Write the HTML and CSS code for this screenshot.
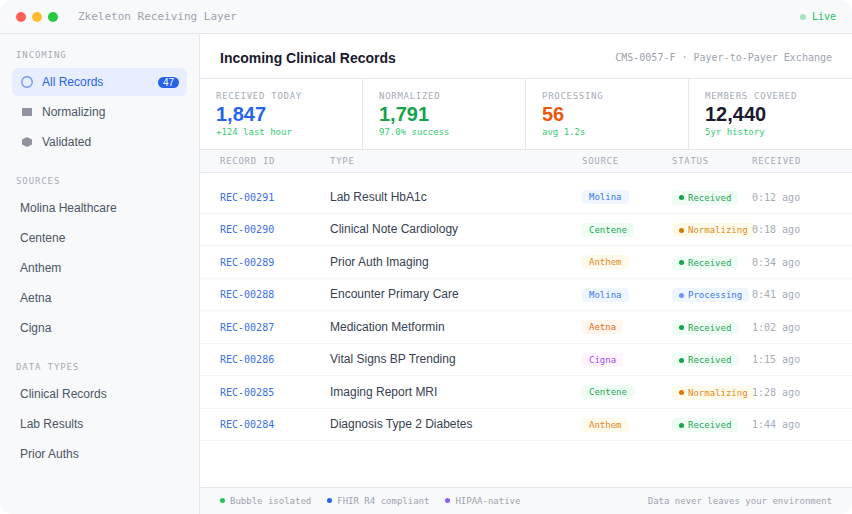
FILE: index.html
```html
<!DOCTYPE html>
<html lang="en">
<head>
<meta charset="utf-8">
<title>Zkeleton Receiving Layer</title>
<link rel="stylesheet" href="styles.css">
</head>
<body>
<div class="window">
  <header class="titlebar">
    <div class="lights"><span class="light red"></span><span class="light yellow"></span><span class="light green"></span></div>
    <span class="app-title">Zkeleton Receiving Layer</span>
    <span class="live"><span class="live-dot"></span>Live</span>
  </header>
  <div class="body">
    <aside class="sidebar">
      <div class="nav-label first">INCOMING</div>
      <div class="nav-item active"><svg class="nav-icon" viewBox="0 0 12 12"><circle cx="6" cy="6" r="5.25" fill="none" stroke="#6f94f3" stroke-width="1.3"/></svg>All Records<span class="count">47</span></div>
      <div class="nav-item"><svg class="nav-icon" viewBox="0 0 12 12"><rect x="1" y="2" width="10" height="8" fill="#8f939e"/></svg>Normalizing</div>
      <div class="nav-item"><svg class="nav-icon" viewBox="0 0 12 12"><polygon points="6,1 11,3.5 11,8.5 6,11 1,8.5 1,3.5" fill="#8f939e"/></svg>Validated</div>
      <div class="nav-label">SOURCES</div>
      <div class="nav-item">Molina Healthcare</div>
      <div class="nav-item">Centene</div>
      <div class="nav-item">Anthem</div>
      <div class="nav-item">Aetna</div>
      <div class="nav-item">Cigna</div>
      <div class="nav-label">DATA TYPES</div>
      <div class="nav-item">Clinical Records</div>
      <div class="nav-item">Lab Results</div>
      <div class="nav-item">Prior Auths</div>
    </aside>
    <main class="main">
      <div class="main-head">
        <h1>Incoming Clinical Records</h1>
        <span class="spec">CMS-0057-F · Payer-to-Payer Exchange</span>
      </div>
      <div class="stats">
        <div class="stat"><div class="stat-label">RECEIVED TODAY</div><div class="stat-value blue">1,847</div><div class="stat-note">+124 last hour</div></div>
        <div class="stat"><div class="stat-label">NORMALIZED</div><div class="stat-value green">1,791</div><div class="stat-note">97.0% success</div></div>
        <div class="stat"><div class="stat-label">PROCESSING</div><div class="stat-value orange">56</div><div class="stat-note">avg 1.2s</div></div>
        <div class="stat"><div class="stat-label">MEMBERS COVERED</div><div class="stat-value dark">12,440</div><div class="stat-note">5yr history</div></div>
      </div>
      <div class="table-head row-grid"><span>RECORD ID</span><span>TYPE</span><span>SOURCE</span><span>STATUS</span><span>RECEIVED</span></div>
      <div class="rows">
        <div class="row row-grid"><span class="rec">REC-00291</span><span class="type">Lab Result HbA1c</span><span class="cell"><span class="src molina">Molina</span></span><span class="cell cell-st"><span class="st received"><i></i>Received</span></span><span class="time">0:12 ago</span></div>
        <div class="row row-grid"><span class="rec">REC-00290</span><span class="type">Clinical Note Cardiology</span><span class="cell"><span class="src centene">Centene</span></span><span class="cell cell-st"><span class="st normalizing"><i></i>Normalizing</span></span><span class="time">0:18 ago</span></div>
        <div class="row row-grid"><span class="rec">REC-00289</span><span class="type">Prior Auth Imaging</span><span class="cell"><span class="src anthem">Anthem</span></span><span class="cell cell-st"><span class="st received"><i></i>Received</span></span><span class="time">0:34 ago</span></div>
        <div class="row row-grid"><span class="rec">REC-00288</span><span class="type">Encounter Primary Care</span><span class="cell"><span class="src molina">Molina</span></span><span class="cell cell-st"><span class="st processing"><i></i>Processing</span></span><span class="time">0:41 ago</span></div>
        <div class="row row-grid"><span class="rec">REC-00287</span><span class="type">Medication Metformin</span><span class="cell"><span class="src aetna">Aetna</span></span><span class="cell cell-st"><span class="st received"><i></i>Received</span></span><span class="time">1:02 ago</span></div>
        <div class="row row-grid"><span class="rec">REC-00286</span><span class="type">Vital Signs BP Trending</span><span class="cell"><span class="src cigna">Cigna</span></span><span class="cell cell-st"><span class="st received"><i></i>Received</span></span><span class="time">1:15 ago</span></div>
        <div class="row row-grid"><span class="rec">REC-00285</span><span class="type">Imaging Report MRI</span><span class="cell"><span class="src centene">Centene</span></span><span class="cell cell-st"><span class="st normalizing"><i></i>Normalizing</span></span><span class="time">1:28 ago</span></div>
        <div class="row row-grid"><span class="rec">REC-00284</span><span class="type">Diagnosis Type 2 Diabetes</span><span class="cell"><span class="src anthem">Anthem</span></span><span class="cell cell-st"><span class="st received"><i></i>Received</span></span><span class="time">1:44 ago</span></div>
      </div>
      <footer class="foot">
        <span class="foot-item"><i class="d-green"></i>Bubble isolated</span>
        <span class="foot-item"><i class="d-blue"></i>FHIR R4 compliant</span>
        <span class="foot-item"><i class="d-purple"></i>HIPAA-native</span>
        <span class="foot-right">Data never leaves your environment</span>
      </footer>
    </main>
  </div>
</div>
</body>
</html>
```
FILE: styles.css
```css
* { box-sizing: border-box; }
html, body { margin: 0; height: 100%; background: #fff; }
body { font-family: "Liberation Sans", Arial, sans-serif; overflow: hidden; }
.window { width: 852px; height: 514px; border-radius: 12px; overflow: hidden; display: flex; flex-direction: column; background: #fff; }
.titlebar { height: 34px; flex: none; display: flex; align-items: center; padding: 0 16px; background: #f8f9fb; border-bottom: 1px solid #e5e7eb; font-family: "DejaVu Sans Mono", monospace; font-size: 11px; }
.lights { display: flex; gap: 6px; margin-right: 20px; }
.light { width: 10px; height: 10px; border-radius: 50%; }
.red { background: #ff5f57; }
.yellow { background: #febc2e; }
.green { background: #28c840; }
.app-title { color: #9ca3af; }
.live { margin-left: auto; display: flex; align-items: center; gap: 6px; color: #22c55e; font-size: 10px; }
.live-dot { width: 6px; height: 6px; border-radius: 50%; background: #a6e3bd; }
.body { flex: 1; display: flex; min-height: 0; }
.sidebar { width: 200px; flex: none; background: #f8f9fb; border-right: 1px solid #e5e7eb; padding: 16px 12px 0; }
.nav-label { font-family: "DejaVu Sans Mono", monospace; font-size: 9px; letter-spacing: 0.9px; color: #a5abb6; line-height: 10px; margin: 20px 4px 8px; }
.nav-label.first { margin-top: 0; }
.nav-item { height: 28px; margin-bottom: 2px; display: flex; align-items: center; gap: 9px; padding: 0 8px; border-radius: 6px; font-size: 12px; color: #4b5563; }
.nav-item.active { background: #e8eeff; color: #2563eb; }
.nav-icon { width: 12px; height: 12px; flex: none; margin-left: 1px; }
.count { margin-left: auto; background: #2563eb; color: #fff; font-size: 10px; line-height: 11px; padding: 0 5px; border-radius: 6px; }
.main { flex: 1; min-width: 0; display: flex; flex-direction: column; }
.main-head { height: 45px; flex: none; display: flex; align-items: center; justify-content: space-between; padding: 2px 20px 0; border-bottom: 1px solid #e5e7eb; }
h1 { margin: 0; padding-top: 1px; font-size: 14px; font-weight: 700; color: #1a1a2e; }
.spec { font-family: "DejaVu Sans Mono", monospace; font-size: 10px; color: #9ca3af; }
.stats { height: 71px; flex: none; display: grid; grid-template-columns: repeat(4, 1fr); border-bottom: 1px solid #e5e7eb; }
.stat { padding: 12px 16px 0; border-right: 1px solid #e5e7eb; }
.stat:last-child { border-right: 0; }
.stat-label { font-family: "DejaVu Sans Mono", monospace; font-size: 9px; letter-spacing: 0.72px; color: #a5abb6; line-height: 10px; }
.stat-value { font-size: 20px; font-weight: 700; line-height: 24px; margin-top: 1px; }
.blue { color: #2563eb; }
.stats .green { background: none; color: #16a34a; }
.orange { color: #ea580c; }
.dark { color: #1a1a2e; }
.stat-note { font-family: "DejaVu Sans Mono", monospace; font-size: 9px; color: #34cc6e; line-height: 11px; margin-top: 1px; }
.row-grid { display: grid; grid-template-columns: 110px 1fr 90px 80px 80px; padding: 0 20px; align-items: center; }
.table-head { height: 23px; flex: none; background: #f8f9fb; border-bottom: 1px solid #e5e7eb; font-family: "DejaVu Sans Mono", monospace; font-size: 9px; letter-spacing: 0.72px; color: #a5abb6; }
.rows { flex: 1; padding-top: 8px; }
.row { height: 32.5px; border-bottom: 1px solid #f3f4f6; }
.rec { font-family: "DejaVu Sans Mono", monospace; font-size: 10px; color: #3b6fe8; padding-top: 1px; }
.type { font-size: 12px; color: #374151; }
.cell { display: flex; align-items: center; padding-top: 1px; }
.cell-st { padding-top: 2px; }
.src, .st { display: inline-flex; align-items: center; height: 14px; border-radius: 4px; padding: 0 7px; font-family: "DejaVu Sans Mono", monospace; font-size: 9px; white-space: nowrap; }
.molina { background: #eff6ff; color: #3b76f0; }
.centene { background: #f0fdf4; color: #22a855; }
.anthem { background: #fffbeb; color: #e08a1a; }
.aetna { background: #fff7ed; color: #ea6a1c; }
.cigna { background: #fdf4ff; color: #a14df0; }
.st i { width: 5px; height: 5px; border-radius: 50%; margin-right: 4px; flex: none; }
.received { background: #f0fdf4; color: #22a855; }
.received i { background: #16a34a; }
.normalizing { background: #fffbeb; color: #e08a1a; }
.normalizing i { background: #d97706; }
.processing { background: #eff6ff; color: #3b76f0; }
.processing i { background: #6f94f3; }
.time { font-family: "DejaVu Sans Mono", monospace; font-size: 10px; color: #a5abb6; padding-top: 1px; }
.foot { height: 27px; flex: none; display: flex; align-items: center; gap: 16px; padding: 0 20px 1px; background: #f8f9fb; border-top: 1px solid #e5e7eb; font-family: "DejaVu Sans Mono", monospace; font-size: 9px; color: #9ca3af; }
.foot-item { display: flex; align-items: center; gap: 5px; }
.foot-item i { width: 5px; height: 5px; border-radius: 50%; }
.d-green { background: #22c55e; }
.d-blue { background: #2563eb; }
.d-purple { background: #8b5cf6; }
.foot-right { margin-left: auto; }
```
